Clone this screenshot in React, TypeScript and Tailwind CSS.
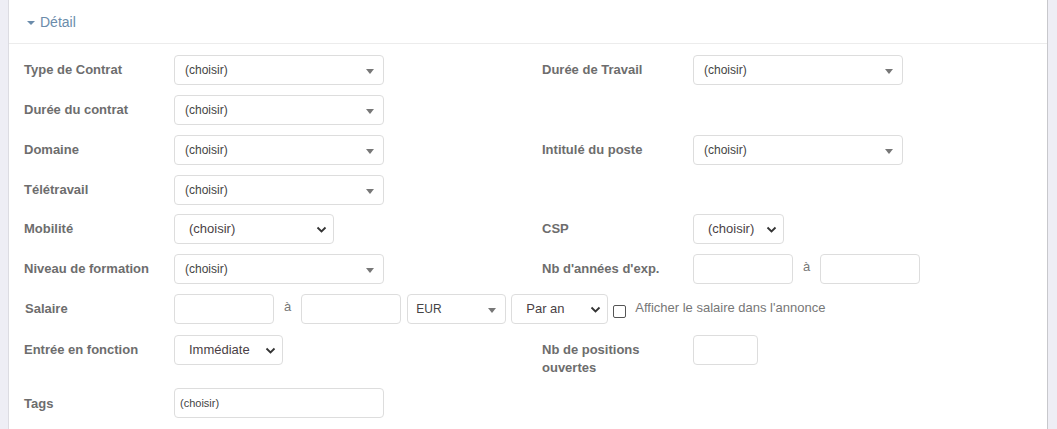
import type { ReactNode } from 'react';

const FONT = "font-['Liberation_Sans',Arial,sans-serif]";

function Label({ children, w = 'w-[150px]' }: { children: ReactNode; w?: string }) {
  return (
    <div className={`${w} shrink-0 pt-[6px] text-[13px] font-bold leading-[18px] text-[#6d6d6d]`}>
      {children}
    </div>
  );
}

// select2-style dropdown with a small filled triangle
function Select2({ value = '(choisir)', w = 'w-[210px]', pl = 'pl-[10px]' }: { value?: string; w?: string; pl?: string }) {
  return (
    <div className={`${w} ${pl} relative flex h-[30px] items-center rounded border border-[#ddd] bg-white pr-6 text-[12px] text-[#444]`}>
      <span className="truncate">{value}</span>
      <span className="absolute right-[9px] top-[13px] h-0 w-0 border-x-[4px] border-t-[5px] border-x-transparent border-t-[#777]" />
    </div>
  );
}

// native-looking select with a chevron
function NativeSelect({ value = '(choisir)', w }: { value?: string; w: string }) {
  return (
    <div className={`${w} relative flex h-[30px] items-center rounded border border-[#ddd] bg-white pl-[14px] text-[13px] text-[#4a3f45]`}>
      <span>{value}</span>
      <svg className="absolute right-[6px] top-[11px]" width="11" height="7" viewBox="0 0 11 7" fill="none">
        <path d="M1.5 1.5 5.5 5.5 9.5 1.5" stroke="#333" strokeWidth="1.8" />
      </svg>
    </div>
  );
}

function TextBox({ w = 'w-[100px]' }: { w?: string }) {
  return <input className={`${w} h-[30px] rounded border border-[#ddd] bg-white outline-none`} />;
}

function A() {
  return <span className="pt-[6px] text-[13px] text-[#777]">à</span>;
}

function Row({ left, right, mb = 'mb-[10px]' }: { left: ReactNode; right?: ReactNode; mb?: string }) {
  return (
    <div className={`flex ${mb}`}>
      <div className="flex w-[518px] shrink-0">{left}</div>
      <div className="flex">{right}</div>
    </div>
  );
}

export default function App() {
  return (
    <div className={`min-h-screen bg-[#eeeef5] pl-2 pr-[9px] ${FONT}`}>
      <div className="h-[429px] border-x border-l-[#dcdce2] border-r-[#c8c8cc] bg-white">
        <div className="flex h-[44px] items-center border-b border-[#ececec] pl-[18px] pt-[2px]">
          <span className="mr-[5px] h-0 w-0 border-x-[4px] border-t-[4px] border-x-transparent border-t-[#6b8cab]" />
          <span className="text-[14px] text-[#6b8cab]">Détail</span>
        </div>

        <div className="pl-[15px] pt-[11px]">
          <Row
            left={<><Label>Type de Contrat</Label><Select2 /></>}
            right={<><Label w="w-[151px]">Durée de Travail</Label><Select2 /></>}
          />
          <Row left={<><Label>Durée du contrat</Label><Select2 /></>} />
          <Row
            left={<><Label>Domaine</Label><Select2 /></>}
            right={<><Label w="w-[151px]">Intitulé du poste</Label><Select2 /></>}
          />
          <Row left={<><Label>Télétravail</Label><Select2 /></>} mb="mb-[9px]" />
          <Row
            left={<><Label>Mobilité</Label><NativeSelect w="w-[160px]" /></>}
            right={<><Label w="w-[151px]">CSP</Label><NativeSelect w="w-[91px]" /></>}
          />
          <Row
            left={<><Label>Niveau de formation</Label><Select2 /></>}
            right={
              <>
                <Label w="w-[151px]">Nb d'années d'exp.</Label>
                <div className="flex items-start">
                  <TextBox />
                  <span className="ml-[10px] mr-[10px]"><A /></span>
                  <TextBox />
                </div>
              </>
            }
          />
          <div className="mb-[11px] flex">
            <div className="w-[150px] shrink-0 pl-px"><Label>Salaire</Label></div>
            <div className="flex items-start">
              <TextBox />
              <span className="ml-[10px] mr-[10px]"><A /></span>
              <TextBox />
              <div className="ml-[6px]"><Select2 value="EUR" w="w-[99px]" pl="pl-[8px]" /></div>
              <div className="ml-[5px]"><NativeSelect value="Par an" w="w-[97px]" /></div>
              <span className="ml-[5px] mt-[11px] h-[13px] w-[13px] rounded-[2px] border border-[#555]" />
              <span className="ml-[9px] pt-[4px] text-[13px] text-[#777]">Afficher le salaire dans l'annonce</span>
            </div>
          </div>
          <Row
            mb="mb-[11px]"
            left={<><Label>Entrée en fonction</Label><NativeSelect value="Immédiate" w="w-[109px]" /></>}
            right={
              <>
                <Label w="w-[151px]">Nb de positions<br />ouvertes</Label>
                <TextBox w="w-[65px]" />
              </>
            }
          />
          <Row
            left={
              <>
                <div className="w-[150px] shrink-0 pt-[7px] text-[13px] font-bold leading-[18px] text-[#6d6d6d]">Tags</div>
                <div className="flex h-[30px] w-[210px] items-center rounded border border-[#ddd] bg-white pl-[5px] text-[11px] text-[#444]">
                  (choisir)
                </div>
              </>
            }
          />
        </div>
      </div>
    </div>
  );
}
